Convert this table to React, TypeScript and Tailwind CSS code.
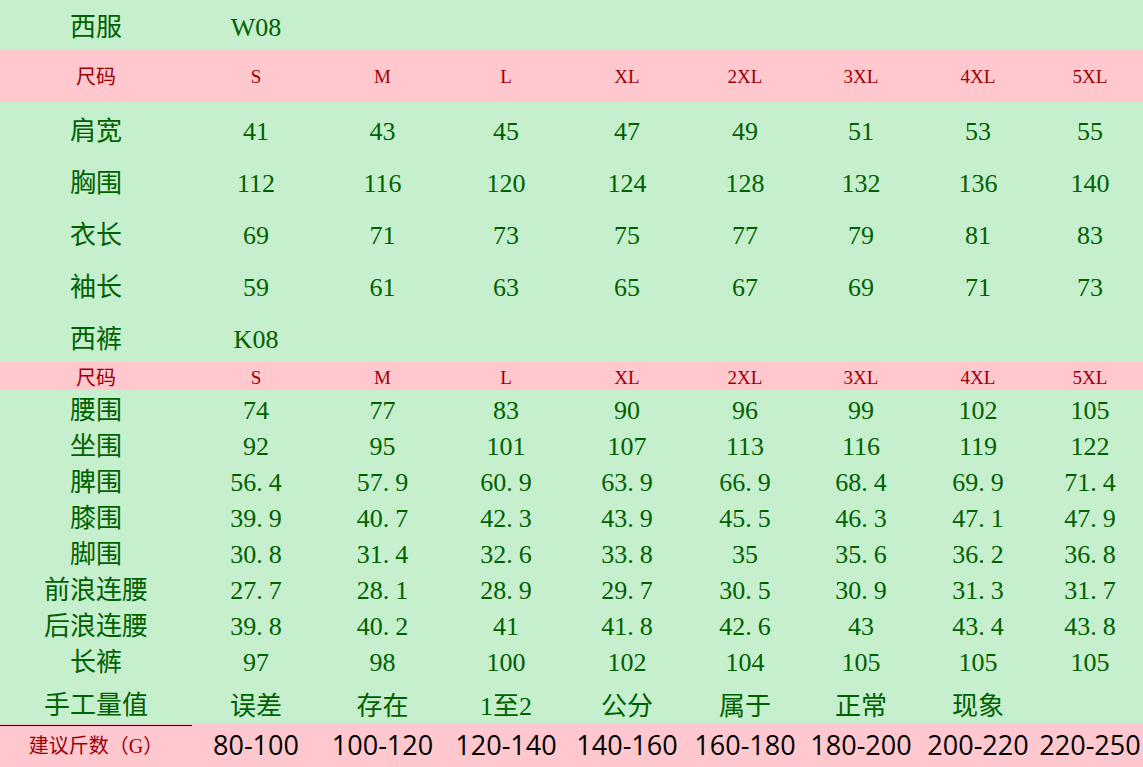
import React from 'react';

const cols = 'grid grid-cols-[192px_128px_125px_122px_120px_116px_116px_118px_106px]';
const cjk = { fontFamily: '"Liberation Serif", "Noto Sans CJK SC", serif' };

const sizes = ['S', 'M', 'L', 'XL', '2XL', '3XL', '4XL', '5XL'];

const jacket: [string, string[]][] = [
    ['肩宽', ['41', '43', '45', '47', '49', '51', '53', '55']],
    ['胸围', ['112', '116', '120', '124', '128', '132', '136', '140']],
    ['衣长', ['69', '71', '73', '75', '77', '79', '81', '83']],
    ['袖长', ['59', '61', '63', '65', '67', '69', '71', '73']],
];

const pants: [string, string[]][] = [
    ['腰围', ['74', '77', '83', '90', '96', '99', '102', '105']],
    ['坐围', ['92', '95', '101', '107', '113', '116', '119', '122']],
    ['脾围', ['56.4', '57.9', '60.9', '63.9', '66.9', '68.4', '69.9', '71.4']],
    ['膝围', ['39.9', '40.7', '42.3', '43.9', '45.5', '46.3', '47.1', '47.9']],
    ['脚围', ['30.8', '31.4', '32.6', '33.8', '35', '35.6', '36.2', '36.8']],
    ['前浪连腰', ['27.7', '28.1', '28.9', '29.7', '30.5', '30.9', '31.3', '31.7']],
    ['后浪连腰', ['39.8', '40.2', '41', '41.8', '42.6', '43', '43.4', '43.8']],
    ['长裤', ['97', '98', '100', '102', '104', '105', '105', '105']],
];

const weights = ['80-100', '100-120', '120-140', '140-160', '160-180', '180-200', '200-220', '220-250'];
const note = ['误差', '存在', '1至2', '公分', '属于', '正常', '现象', ''];

// spreadsheet-style decimal: the point takes a wider slot like SimSun
function Num({ v }: { v: string }) {
    const [a, b] = v.split('.');
    if (b === undefined) return <>{v}</>;
    return (
        <>
            {a}
            <span className="mr-[6px]">.</span>
            {b}
        </>
    );
}

function Row({ label, cells, className, cellClass }: { label: string; cells: string[]; className: string; cellClass: string }) {
    return (
        <div className={`${cols} ${className}`}>
            <div className={`flex justify-center ${cellClass}`}>{label}</div>
            {cells.map((c, i) => (
                <div key={i} className={`flex justify-center whitespace-nowrap ${cellClass}`}>
                    <Num v={c} />
                </div>
            ))}
        </div>
    );
}

function SizeRow({ className }: { className: string }) {
    return (
        <div className={`${cols} bg-[#FFC7CE] text-[#9C0006] ${className}`}>
            <div className="flex justify-center items-center text-[20px]">尺码</div>
            {sizes.map((s) => (
                <div key={s} className="flex justify-center items-center text-[19px]">{s}</div>
            ))}
        </div>
    );
}

export default function App() {
    return (
        <div className="w-[1143px] h-[767px] overflow-hidden bg-[#C6EFCE] text-[#006100]" style={cjk}>
            <Row label="西服" cells={['W08', '', '', '', '', '', '', '']} className="h-[50px] items-center text-[26px]" cellClass="pt-[4px]" />
            <SizeRow className="h-[51px] pt-[3px]" />
            {jacket.map(([l, v]) => (
                <Row key={l} label={l} cells={v} className="h-[52px] items-center text-[26px]" cellClass="pt-[8px]" />
            ))}
            <Row label="西裤" cells={['K08', '', '', '', '', '', '', '']} className="h-[53px] items-center text-[26px]" cellClass="pt-[7px]" />
            <SizeRow className="h-[28px] pt-[1px]" />
            {pants.map(([l, v]) => (
                <Row key={l} label={l} cells={v} className="h-[36px] items-center text-[26px]" cellClass="pt-[1px]" />
            ))}
            <div className={`${cols} h-[45px] items-center text-[26px]`}>
                <div className="h-full flex justify-center items-center pt-[8px] border-b border-black">手工量值</div>
                {note.map((c, i) => (
                    <div key={i} className="flex justify-center pt-[8px]">{c}</div>
                ))}
            </div>
            <div className={`${cols} h-[44px] items-center bg-[#FFC7CE]`}>
                <div className="flex justify-center text-[20px] text-[#9C0006] pt-[2px]">建议斤数（G）</div>
                {weights.map((w) => (
                    <div
                        key={w}
                        className="flex justify-center text-[27px] text-black whitespace-nowrap"
                        style={{ fontFamily: '"Open Sans", "Noto Sans", sans-serif' }}
                    >
                        {w}
                    </div>
                ))}
            </div>
        </div>
    );
}
